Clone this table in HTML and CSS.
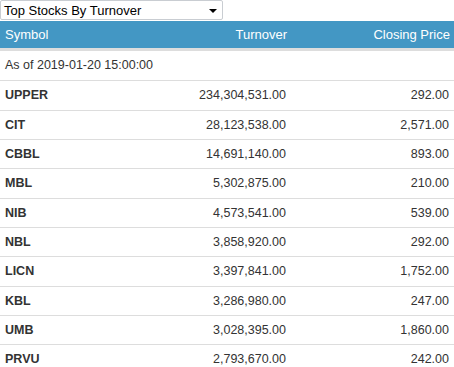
FILE: index.html
```html
<!DOCTYPE html>
<html>
<head>
<meta charset="utf-8">
<link rel="stylesheet" href="styles.css">
</head>
<body>
<div class="picker">
  <span class="picker-label">Top Stocks By Turnover</span>
  <span class="picker-arrow"></span>
</div>
<table class="stocks">
  <colgroup>
    <col class="c-sym"><col class="c-turn"><col class="c-price">
  </colgroup>
  <thead>
    <tr><th class="left">Symbol</th><th class="right">Turnover</th><th class="right">Closing Price</th></tr>
  </thead>
  <tbody>
    <tr class="asof"><td colspan="3">As of 2019-01-20 15:00:00</td></tr>
    <tr><td class="sym">UPPER</td><td class="right">234,304,531.00</td><td class="right">292.00</td></tr>
    <tr><td class="sym">CIT</td><td class="right">28,123,538.00</td><td class="right">2,571.00</td></tr>
    <tr><td class="sym">CBBL</td><td class="right">14,691,140.00</td><td class="right">893.00</td></tr>
    <tr><td class="sym">MBL</td><td class="right">5,302,875.00</td><td class="right">210.00</td></tr>
    <tr><td class="sym">NIB</td><td class="right">4,573,541.00</td><td class="right">539.00</td></tr>
    <tr><td class="sym">NBL</td><td class="right">3,858,920.00</td><td class="right">292.00</td></tr>
    <tr><td class="sym">LICN</td><td class="right">3,397,841.00</td><td class="right">1,752.00</td></tr>
    <tr><td class="sym">KBL</td><td class="right">3,286,980.00</td><td class="right">247.00</td></tr>
    <tr><td class="sym">UMB</td><td class="right">3,028,395.00</td><td class="right">1,860.00</td></tr>
    <tr><td class="sym">PRVU</td><td class="right">2,793,670.00</td><td class="right">242.00</td></tr>
  </tbody>
</table>
</body>
</html>
```
FILE: styles.css
```css
html, body {
  margin: 0;
  padding: 0;
  background: #fff;
}
body {
  font-family: "Liberation Sans", Arial, sans-serif;
  font-size: 12.5px;
  color: #333;
}
.picker {
  box-sizing: border-box;
  width: 223px;
  height: 20px;
  border: 1px solid #c9cdd2;
  border-radius: 2px;
  display: flex;
  align-items: center;
  justify-content: space-between;
  padding: 0 5px 0 3px;
  margin-bottom: 1px;
  font-size: 13px;
  color: #000;
}
.picker-arrow {
  width: 0;
  height: 0;
  border-left: 4px solid transparent;
  border-right: 4px solid transparent;
  border-top: 4px solid #000;
  margin-top: 1px;
}
.stocks {
  width: 100%;
  border-collapse: collapse;
  table-layout: fixed;
}
.c-sym { width: 145px; }
.c-turn { width: 146px; }
.c-price { width: 163px; }
.stocks th {
  background: #4397c4;
  color: #fff;
  font-weight: normal;
  font-size: 13px;
  padding: 5px 4px 5px 5px;
  line-height: 17px;
  border-bottom: 3px solid #ddd;
}
.stocks td {
  padding: 5px;
  line-height: 18.35px;
  border-top: 1px solid #ddd;
}
.stocks .asof td {
  border-top: 0;
  padding-top: 5px;
  padding-bottom: 6px;
}
.left { text-align: left; }
.right { text-align: right; }
.stocks td.sym {
  font-weight: bold;
}
```
